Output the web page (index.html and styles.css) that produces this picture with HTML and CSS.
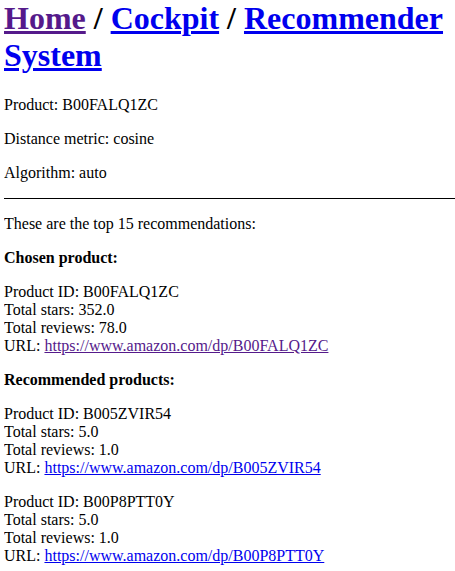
FILE: index.html
```html
<!DOCTYPE html>
<html>
<head>
<meta charset="utf-8">
<link rel="stylesheet" href="styles.css">
</head>
<body class="page">
<h1 class="crumbs"><a class="link visited" href="#">Home</a> / <a class="link" href="#">Cockpit</a> / <a class="link" href="#">Recommender System</a></h1>
<p class="para">Product: B00FALQ1ZC</p>
<p class="para">Distance metric: cosine</p>
<p class="para">Algorithm: auto</p>
<hr class="rule">
<p class="para">These are the top 15 recommendations:</p>
<p class="para"><b>Chosen product:</b></p>
<p class="para">Product ID: B00FALQ1ZC<br>Total stars: 352.0<br>Total reviews: 78.0<br>URL: <a class="link visited" href="#">https://www.amazon.com/dp/B00FALQ1ZC</a></p>
<p class="para"><b>Recommended products:</b></p>
<p class="para">Product ID: B005ZVIR54<br>Total stars: 5.0<br>Total reviews: 1.0<br>URL: <a class="link" href="#">https://www.amazon.com/dp/B005ZVIR54</a></p>
<p class="para">Product ID: B00P8PTT0Y<br>Total stars: 5.0<br>Total reviews: 1.0<br>URL: <a class="link" href="#">https://www.amazon.com/dp/B00P8PTT0Y</a></p>
</body>
</html>
```
FILE: styles.css
```css
html, body {
  background: #fff;
}
.page {
  margin: 0 0 0 4px;
  font-family: "Liberation Serif", "Times New Roman", serif;
  font-size: 16px;
  color: #000;
}
.crumbs {
  font-size: 32px;
  font-weight: bold;
  margin: 0 0 22px 0;
}
.para {
  margin: 16px 0;
}
.link {
  color: #0000EE;
  text-decoration: underline;
}
.link.visited {
  color: #551A8B;
}
.rule {
  margin: 8px 0;
  border: 0;
  border-top: 1px solid #000;
  height: 0;
}
```
